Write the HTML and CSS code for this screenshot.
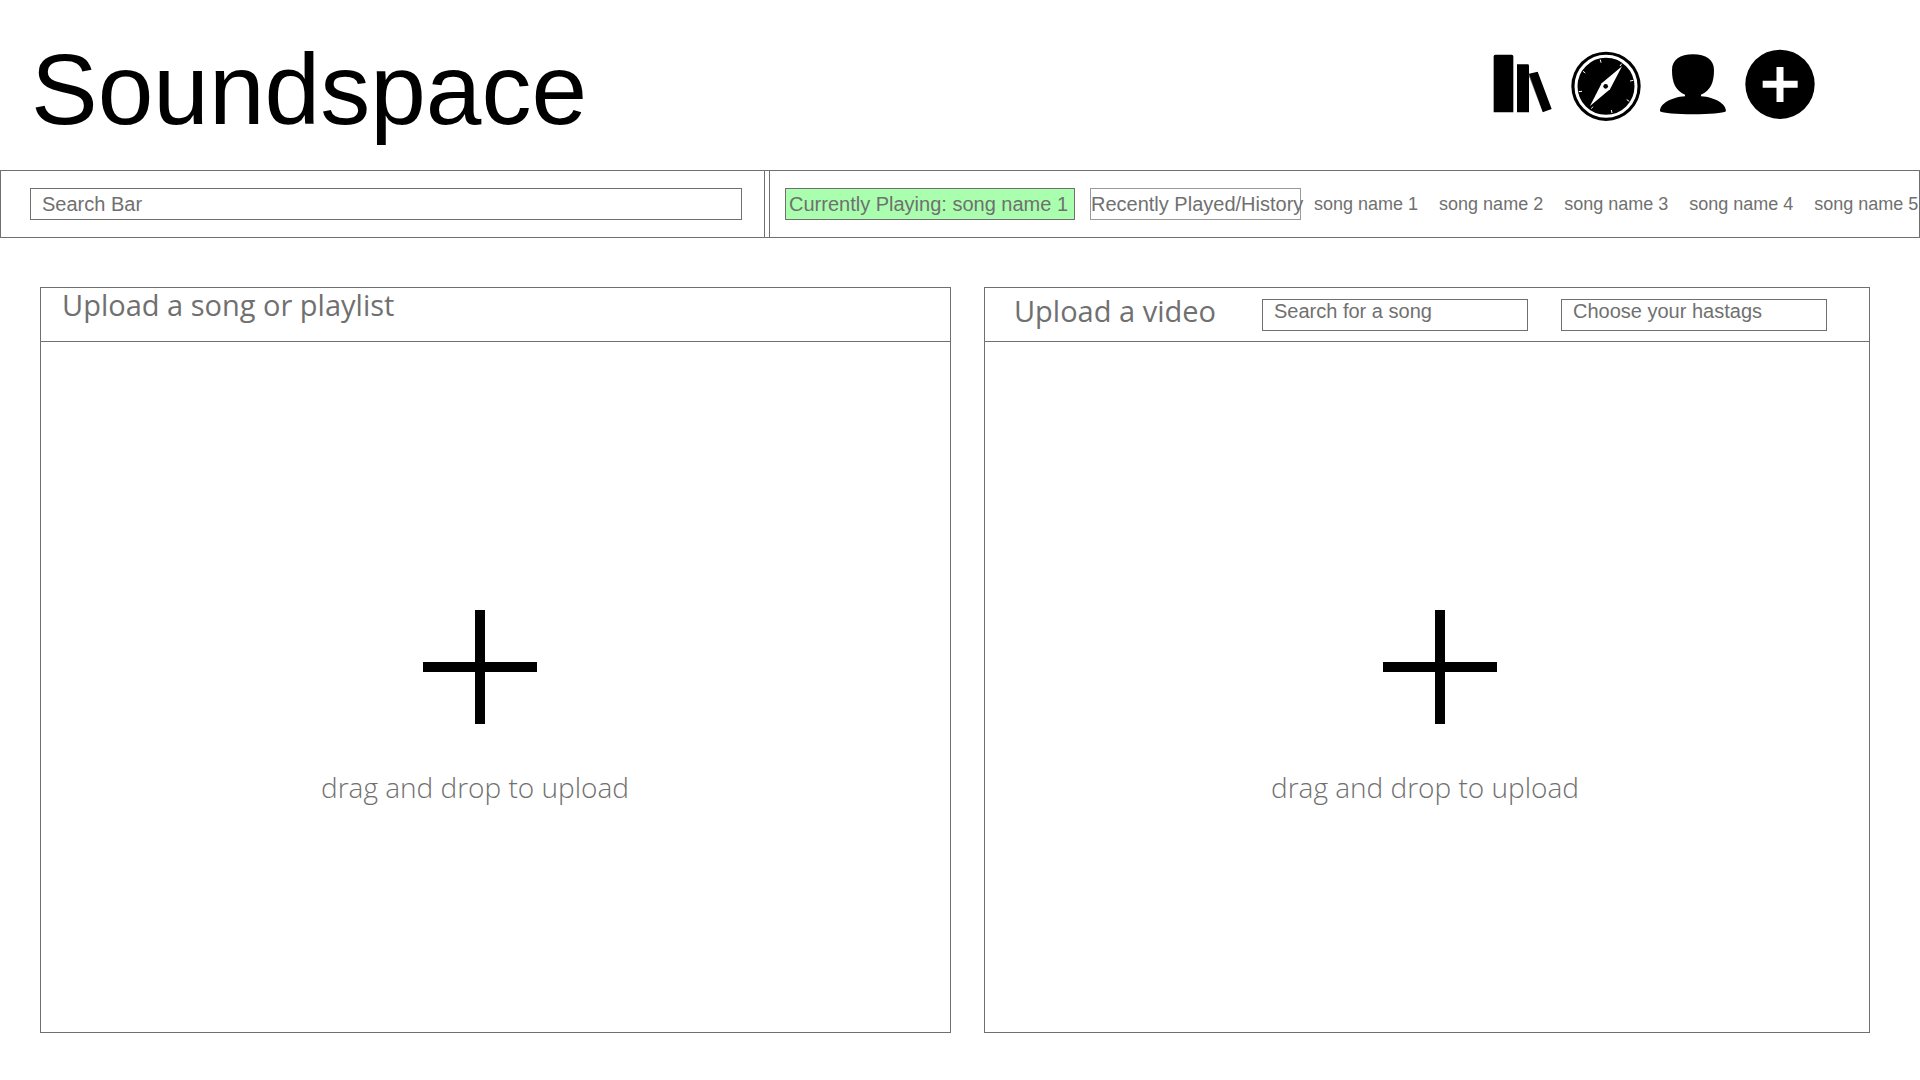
FILE: index.html
```html
<!DOCTYPE html>
<html lang="en">
<head>
<meta charset="utf-8">
<meta name="viewport" content="width=device-width, initial-scale=1">
<title>Soundspace</title>
<link rel="stylesheet" href="styles.css">
</head>
<body>
<header class="masthead">
  <h1 class="brand">Soundspace</h1>
  <nav class="icons" aria-label="Main">
    <a class="icon-link" href="#library" aria-label="Library">
      <svg width="60" height="72" viewBox="36 27 180 216"><path d="M41 217V49q0-5 5-5h49q5 0 5 5v168zM111 217V73h32q4 0 4 4v24l26-6 42 112-27 10-41-109v109z"/><path d="M147 104l40 113" fill="none" stroke="#fff" stroke-width="1"/></svg>
    </a>
    <a class="icon-link" href="#explore" aria-label="Explore">
      <svg width="70" height="72" viewBox="272 27 210 216"><circle cx="377" cy="139" r="104"/><circle cx="377" cy="139" r="90" fill="none" stroke="#fff" stroke-width="9"/><path d="M425 79L389 148 329 198 364 130z" fill="#fff"/><circle cx="376" cy="139" r="7"/><path d="M360 59l2 9M424 71l-5 7M459 121l-10 2M447 184l-8-5M395 219l-2-9M333 206l5-6M295 155l10-1M308 94l7 5" fill="none" stroke="#fff" stroke-width="3"/></svg>
    </a>
    <a class="icon-link" href="#profile" aria-label="Profile">
      <svg width="66" height="72" viewBox="540 27 198 216"><path d="M639 43c39 0 63 17 63 47 0 38-10 61-39 74v5c42 3 75 22 75 45-9 6-49 9-99 9s-90-3-99-9c0-23 33-42 75-45v-5c-29-13-39-36-39-74 0-30 24-47 63-47z"/></svg>
    </a>
    <a class="icon-link" href="#upload" aria-label="Add">
      <svg width="70" height="72" viewBox="796 27 210 216"><circle cx="901" cy="133" r="104"/><path d="M849 133h105M901 81v105" fill="none" stroke="#fff" stroke-width="21"/></svg>
    </a>
  </nav>
</header>
<div class="toolbar">
  <form class="toolbar-search" role="search">
    <input class="field" type="search" placeholder="Search Bar" aria-label="Search Bar">
  </form>
  <div class="toolbar-player">
    <button class="now-playing" type="button">Currently Playing: song name 1</button>
    <button class="history" type="button">Recently Played/History</button>
    <ul class="songs">
      <li><a href="#song1">song name 1</a></li>
      <li><a href="#song2">song name 2</a></li>
      <li><a href="#song3">song name 3</a></li>
      <li><a href="#song4">song name 4</a></li>
      <li><a href="#song5">song name 5</a></li>
    </ul>
  </div>
</div>
<main class="panels" id="upload">
  <section class="panel panel-song">
    <div class="panel-head">
      <h2 class="panel-title">Upload a song or playlist</h2>
    </div>
    <button class="dropzone" type="button">
      <svg class="plus" width="114" height="114" viewBox="0 0 114 114"><path d="M0 57h114M57 0v114" stroke="#000" stroke-width="10"/></svg>
      <span class="hint">drag and drop to upload</span>
    </button>
  </section>
  <section class="panel panel-video">
    <div class="panel-head">
      <h2 class="panel-title">Upload a video</h2>
      <input class="field" type="text" placeholder="Search for a song" aria-label="Search for a song">
      <input class="field" type="text" placeholder="Choose your hastags" aria-label="Choose your hastags">
    </div>
    <button class="dropzone" type="button">
      <svg class="plus" width="114" height="114" viewBox="0 0 114 114"><path d="M0 57h114M57 0v114" stroke="#000" stroke-width="10"/></svg>
      <span class="hint">drag and drop to upload</span>
    </button>
  </section>
</main>
</body>
</html>
```
FILE: styles.css
```css
* {
  box-sizing: border-box;
}

body {
  margin: 0;
  min-height: 100vh;
  display: flex;
  flex-direction: column;
  background: #fff;
  color: #707070;
  font: 20px/24px "Liberation Sans", Arial, sans-serif;
}

a {
  color: inherit;
  text-decoration: none;
}

button {
  font: inherit;
  color: inherit;
  cursor: pointer;
}

/* Masthead */
.masthead {
  display: flex;
  align-items: center;
  justify-content: space-between;
  height: 170px;
  padding: 0 105px 0 31px;
  color: #000;
}

.brand {
  margin: 0;
  padding-top: 8px;
  font-size: 100px;
  line-height: 100px;
  font-weight: 400;
}

.icons {
  display: flex;
  gap: 19px;
}

.icon-link svg {
  display: block;
}

/* Toolbar */
.toolbar {
  display: grid;
  grid-template-columns: minmax(0, 765fr) minmax(0, 1151fr);
  gap: 4px;
  height: 68px;
  border: solid #707070;
  border-width: 1px 0;
}

.toolbar-search,
.toolbar-player {
  display: flex;
  align-items: center;
  border: solid #707070;
  border-width: 0 1px;
}

.toolbar-search {
  padding: 0 22px 0 29px;
}

.toolbar-player {
  padding-left: 15px;
}

.field {
  min-width: 0;
  width: 100%;
  height: 32px;
  padding: 0 11px;
  border: 1px solid #707070;
  border-radius: 0;
  background: #fff;
  color: #707070;
  font: inherit;
  appearance: none;
}

.field::placeholder {
  color: #707070;
  opacity: 1;
}

.now-playing,
.history {
  flex: none;
  height: 32px;
  padding: 0;
  border: 1px solid #707070;
  text-align: left;
  white-space: nowrap;
}

.now-playing {
  width: 290px;
  margin-right: 15px;
  padding-left: 3px;
  background: #a9ffae;
}

.history {
  width: 211px;
  margin-right: 13px;
  border: 1px solid #999;
  background: #fff;
}

.songs {
  flex: none;
  display: flex;
  gap: 21px;
  margin: 0;
  padding: 0;
  list-style: none;
  font-size: 18px;
  white-space: nowrap;
}

/* Upload panels */
.panels {
  flex: 1;
  display: flex;
  gap: 33px;
  padding: 49px 50px 47px 40px;
}

.panel {
  display: flex;
  flex-direction: column;
  min-width: 0;
  border: 1px solid #707070;
}

.panel-song {
  flex: 911 1 0;
}

.panel-video {
  flex: 886 1 0;
}

.panel-head {
  display: flex;
  align-items: center;
  height: 54px;
  border-bottom: 1px solid #707070;
}

.panel-song .panel-head {
  padding: 0 21px 12px;
}

.panel-video .panel-head {
  padding: 0 42px 0 29px;
}

.panel-title {
  margin: 0;
  padding-bottom: 8px;
  font: 400 29px/40px "Open Sans", "Noto Sans", sans-serif;
  white-space: nowrap;
}

.panel-video .panel-title {
  flex: 1;
}

.panel-video .field {
  width: 266px;
  padding-bottom: 6px;
}

.panel-video .field + .field {
  margin-left: 33px;
}

.dropzone {
  flex: 1;
  display: flex;
  flex-direction: column;
  align-items: center;
  justify-content: center;
  gap: 43px;
  padding: 43px 4px 0 0;
  border: 0;
  background: none;
}

.panel-song .dropzone {
  padding-right: 41px;
}

.panel-song .plus {
  margin-left: 11px;
}

.panel-video .plus {
  margin-left: 30px;
}

.hint {
  font: 300 28px/40px "Open Sans", "Noto Sans", sans-serif;
}
```
